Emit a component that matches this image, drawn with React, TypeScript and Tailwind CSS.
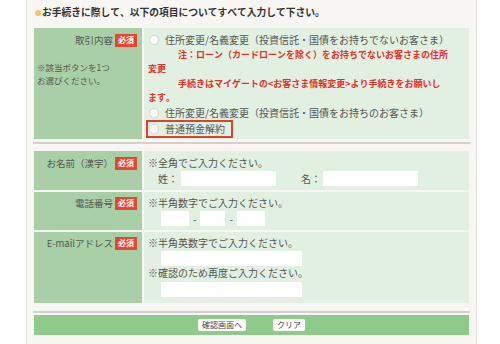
import React from "react"

function Badge() {
  return (
    <span className="inline-flex items-center justify-center w-[22px] h-[13px] bg-[#e8452f] text-white text-[8px] font-bold leading-none">
      必須
    </span>
  )
}

function Radio() {
  return <span className="inline-block w-[10px] h-[10px] rounded-full bg-white border border-[#d4d4d4] shrink-0" />
}

function Input({ w }: { w: string }) {
  return <span className={`inline-block h-[15px] bg-white ${w}`} />
}

function RowLabel({ text, top }: { text: string; top: string }) {
  return (
    <div className={`w-[108px] shrink-0 bg-[#a9cfa7] ${top}`}>
      <div className="flex justify-end items-center gap-[2px] pr-[5px] h-[14px] text-[9.5px] text-[#555]">
        <span>{text}</span>
        <Badge />
      </div>
    </div>
  )
}

export default function App() {
  return (
    <div className="w-[500px] h-[344px] bg-white overflow-hidden font-['Noto_Sans_CJK_JP',sans-serif] [font-kerning:none] [text-spacing-trim:space-all]">
      <div className="ml-[26px] w-[451px] h-full bg-[#f7f6f2] border-x border-[#e4e2dc] px-[7px]">
        <div className="flex items-center h-[16px] pt-[5px] box-content">
          <span className="w-[6px] h-[6px] rounded-full bg-[#f7c46a] ml-[1px] mr-px" />
          <span className="text-[9.75px] font-bold text-[#333] leading-none">
            お手続きに際して、以下の項目についてすべて入力して下さい。
          </span>
        </div>

        {/* 取引内容 */}
        <div className="flex gap-[2px] mt-[7px] h-[111px]">
          <div className="w-[108px] shrink-0 bg-[#a9cfa7] pt-[5px]">
            <div className="flex justify-end items-center gap-[2px] pr-[5px] h-[14px] text-[9.5px] text-[#555]">
              <span>取引内容</span>
              <Badge />
            </div>
            <p className="mt-[14px] pl-[3px] text-[8.5px] leading-[13px] text-[#555]">
              ※該当ボタンを1つ
              <br />
              お選びください。
            </p>
          </div>
          <div className="flex-1 bg-[#e1f0e1] pt-[5px] pl-[4px] text-[10px] leading-[14.5px] text-[#555]">
            <div className="flex items-center gap-[6px] pl-[1px]">
              <Radio />
              <span>住所変更/名義変更（投資信託・国債をお持ちでないお客さま）</span>
            </div>
            <div className="text-[#e5312a] font-bold text-[9px] whitespace-nowrap">
              <p className="pl-[30px]">注：ローン（カードローンを除く）をお持ちでないお客さまの住所</p>
              <p>変更</p>
              <p className="pl-[30px]">手続きはマイゲートの&lt;お客さま情報変更&gt;より手続きをお願いし</p>
              <p>ます。</p>
            </div>
            <div className="flex items-center gap-[6px] pl-[1px]">
              <Radio />
              <span>住所変更/名義変更（投資信託・国債をお持ちのお客さま）</span>
            </div>
            <div className="w-[87px] -ml-[2px] border-2 border-[#e0402a] flex items-center gap-[6px] pl-[1px] h-[18px]">
              <Radio />
              <span>普通預金解約</span>
            </div>
          </div>
        </div>

        <div className="h-[2px] bg-[#d3d1cc] mt-[3px] -mx-px" />

        {/* お名前・電話・メール */}
        <div className="flex flex-col gap-[2px] mt-[7px]">
          <div className="flex gap-[2px] h-[39px]">
            <RowLabel text="お名前（漢字）" top="pt-[5px]" />
            <div className="flex-1 bg-[#e1f0e1] pt-[5px] pl-[4px] text-[10px] leading-[14px] text-[#555]">
              <p>※全角でご入力ください。</p>
              <div className="flex items-center mt-px pl-[10px]">
                <span className="w-[23px]">姓：</span>
                <Input w="w-[95px]" />
                <span className="ml-[25px] w-[22px]">名：</span>
                <Input w="w-[95px]" />
              </div>
            </div>
          </div>

          <div className="flex gap-[2px] h-[38px]">
            <RowLabel text="電話番号" top="pt-[4px]" />
            <div className="flex-1 bg-[#e1f0e1] pt-[4px] pl-[4px] text-[10px] leading-[14px] text-[#555]">
              <p>※半角数字でご入力ください。</p>
              <div className="flex items-center mt-px pl-[13px] gap-[4px]">
                <Input w="w-[28px]" />
                <span>-</span>
                <Input w="w-[25px]" />
                <span>-</span>
                <Input w="w-[28px]" />
              </div>
            </div>
          </div>

          <div className="flex gap-[2px] h-[71px]">
            <RowLabel text="E-mailアドレス" top="pt-[4px]" />
            <div className="flex-1 bg-[#e1f0e1] pt-[4px] pl-[4px] text-[10px] leading-[14px] text-[#555]">
              <p>※半角英数字でご入力ください。</p>
              <div className="mt-px pl-[13px] flex">
                <Input w="w-[141px]" />
              </div>
              <p>※確認のため再度ご入力ください。</p>
              <div className="mt-[2px] pl-[13px] flex">
                <Input w="w-[141px]" />
              </div>
            </div>
          </div>
        </div>

        <div className="h-[2px] bg-[#d3d1cc] mt-[8px] -mx-px" />

        <div className="mt-[2px] h-[20px] bg-[#90ca8a] flex items-center justify-center gap-[27px]">
          <button className="h-[12px] w-[48px] bg-white rounded-[2px] text-[8px] leading-none text-[#444]">
            確認画面へ
          </button>
          <button className="h-[12px] w-[32px] bg-white rounded-[2px] text-[8px] leading-none text-[#444]">
            クリア
          </button>
        </div>
      </div>
    </div>
  )
}
